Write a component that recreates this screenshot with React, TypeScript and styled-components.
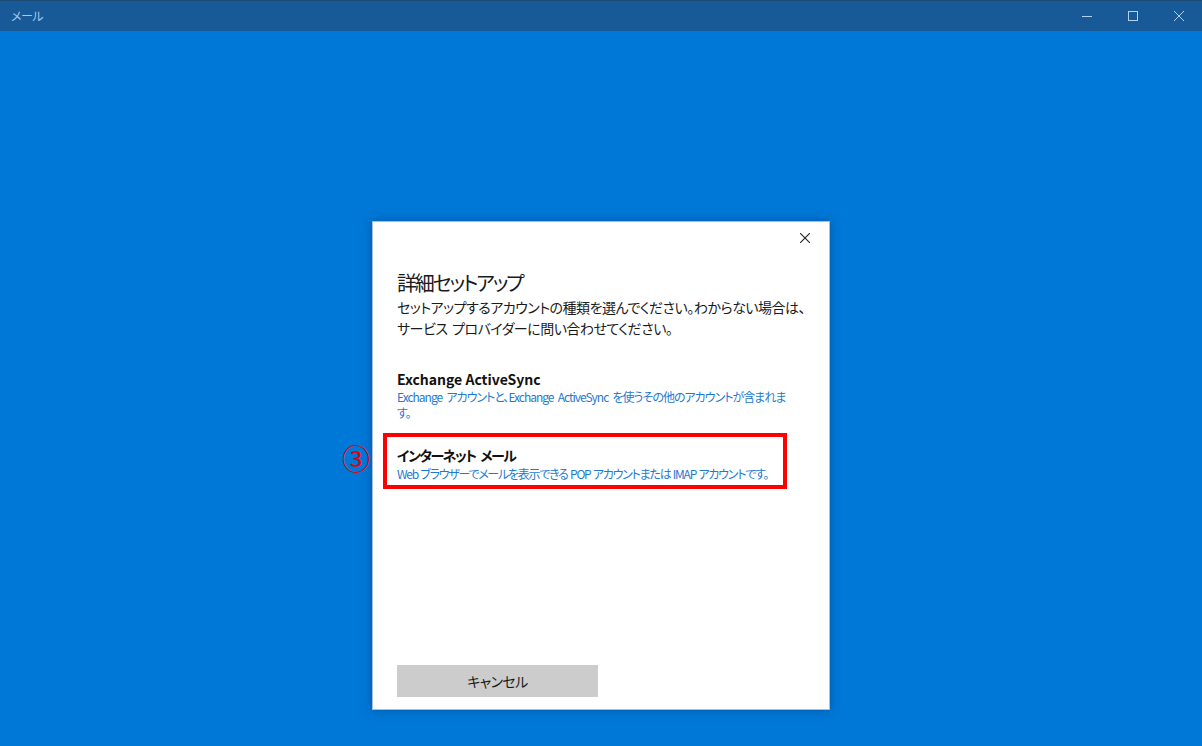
import React from "react";
import styled, { createGlobalStyle } from "styled-components";

const Global = createGlobalStyle`
  html, body { margin: 0; padding: 0; }
  body {
    width: 1202px;
    height: 746px;
    overflow: hidden;
    font-family: "Noto Sans CJK JP", "Noto Sans", sans-serif;
    font-feature-settings: "palt";
  }
`;

const Window = styled.div`
  width: 1202px;
  height: 746px;
  display: flex;
  flex-direction: column;
  background: #0078d7;
`;

const TitleBar = styled.div`
  height: 31px;
  flex: none;
  display: flex;
  align-items: center;
  background: #175a97;
  border-top: 1px solid #1d4a75;
  box-sizing: border-box;
`;

const AppTitle = styled.div`
  flex: 1;
  padding-left: 11px;
  font-size: 12px;
  color: #a9c6e4;
  line-height: 16px;
  letter-spacing: -0.5px;
`;

const Controls = styled.div`
  display: flex;
  height: 100%;
`;

const CtrlButton = styled.div`
  width: 46px;
  height: 100%;
  display: flex;
  align-items: center;
  justify-content: center;
  color: #b5d0ea;
`;

const Stage = styled.div`
  flex: 1;
  display: flex;
  justify-content: center;
  align-items: flex-start;
  padding-top: 190px;
`;

const Dialog = styled.div`
  position: relative;
  width: 458px;
  height: 489px;
  box-sizing: border-box;
  background: #ffffff;
  border: 1px solid #a8bfd6;
  box-shadow: 0 0 10px rgba(0, 30, 80, 0.35);
  display: flex;
  flex-direction: column;
  padding: 0 24px 12px 24px;
`;

const Header = styled.div`
  height: 32px;
  display: flex;
  justify-content: flex-end;
  align-items: center;
  margin-right: -24px;
`;

const CloseBtn = styled.div`
  width: 48px;
  height: 32px;
  display: flex;
  align-items: center;
  justify-content: center;
  color: #222;
`;

const Title = styled.div`
  margin-top: 15px;
  font-size: 20px;
  line-height: 28px;
  color: #1a1a1a;
  white-space: nowrap;
  letter-spacing: -2.2px;
`;

const Desc = styled.div`
  font-size: 14px;
  line-height: 21px;
  color: #1a1a1a;
  white-space: nowrap;
  letter-spacing: -0.5px;
  word-spacing: 2px;
`;

const Option = styled.div<{ $highlight?: boolean; $top: number }>`
  margin-top: ${(p) => p.$top}px;
  ${(p) =>
    p.$highlight
      ? `
    border: 4px solid #ff0000;
    margin-left: -14px;
    width: 404px;
    box-sizing: border-box;
    padding: 8px 0 2px 10px;
  `
      : ``}
`;

const OptionTitle = styled.div<{ $ls?: number }>`
  font-size: 14px;
  font-weight: 700;
  line-height: 20px;
  color: #111;
  white-space: nowrap;
  letter-spacing: ${(p) => p.$ls ?? 0}px;
  word-spacing: ${(p) => (p.$ls ? 3 : 0)}px;
`;

const OptionDesc = styled.div<{ $lh: number; $ls: number; $ws: number }>`
  font-size: 12px;
  line-height: ${(p) => p.$lh}px;
  color: #1f7ad2;
  white-space: nowrap;
  letter-spacing: ${(p) => p.$ls}px;
  word-spacing: ${(p) => p.$ws}px;
`;

const Marker = styled.div`
  position: absolute;
  left: -31px;
  top: 220px;
  font-size: 28px;
  line-height: 32px;
  color: #e60000;
`;

const Footer = styled.div`
  margin-top: auto;
  display: flex;
`;

const CancelButton = styled.div`
  width: 201px;
  height: 32px;
  background: #cccccc;
  display: flex;
  align-items: center;
  justify-content: center;
  font-size: 14px;
  color: #1a1a1a;
  letter-spacing: -0.6px;
`;

export default function App() {
  return (
    <>
      <Global />
      <Window>
        <TitleBar>
          <AppTitle>メール</AppTitle>
          <Controls>
            <CtrlButton>
              <svg width="10" height="10" viewBox="0 0 10 10">
                <line x1="0" y1="5.5" x2="10" y2="5.5" stroke="currentColor" strokeWidth="1" />
              </svg>
            </CtrlButton>
            <CtrlButton>
              <svg width="10" height="10" viewBox="0 0 10 10">
                <rect x="0.5" y="0.5" width="9" height="9" fill="none" stroke="currentColor" strokeWidth="1" />
              </svg>
            </CtrlButton>
            <CtrlButton>
              <svg width="10" height="10" viewBox="0 0 10 10">
                <path d="M0 0 L10 10 M10 0 L0 10" stroke="currentColor" strokeWidth="1" />
              </svg>
            </CtrlButton>
          </Controls>
        </TitleBar>
        <Stage>
          <Dialog>
            <Header>
              <CloseBtn>
                <svg width="10" height="10" viewBox="0 0 10 10">
                  <path d="M0 0 L10 10 M10 0 L0 10" stroke="currentColor" strokeWidth="1.1" />
                </svg>
              </CloseBtn>
            </Header>
            <Title>詳細セットアップ</Title>
            <Desc>
              セットアップするアカウントの種類を選んでください。わからない場合は、
              <br />
              サービス プロバイダーに問い合わせてください。
            </Desc>
            <Option $top={30}>
              <OptionTitle>Exchange ActiveSync</OptionTitle>
              <OptionDesc $lh={16} $ls={-1.0} $ws={2.5}>
                Exchange アカウントと、Exchange ActiveSync を使うその他のアカウントが含まれま
                <br />
                す。
              </OptionDesc>
            </Option>
            <Option $top={12} $highlight>
              <OptionTitle $ls={-1.5}>インターネット メール</OptionTitle>
              <OptionDesc $lh={18} $ls={-1.25} $ws={1}>
                Web ブラウザーでメールを表示できる POP アカウントまたは IMAP アカウントです。
              </OptionDesc>
            </Option>
            <Marker>③</Marker>
            <Footer>
              <CancelButton>キャンセル</CancelButton>
            </Footer>
          </Dialog>
        </Stage>
      </Window>
    </>
  );
}
